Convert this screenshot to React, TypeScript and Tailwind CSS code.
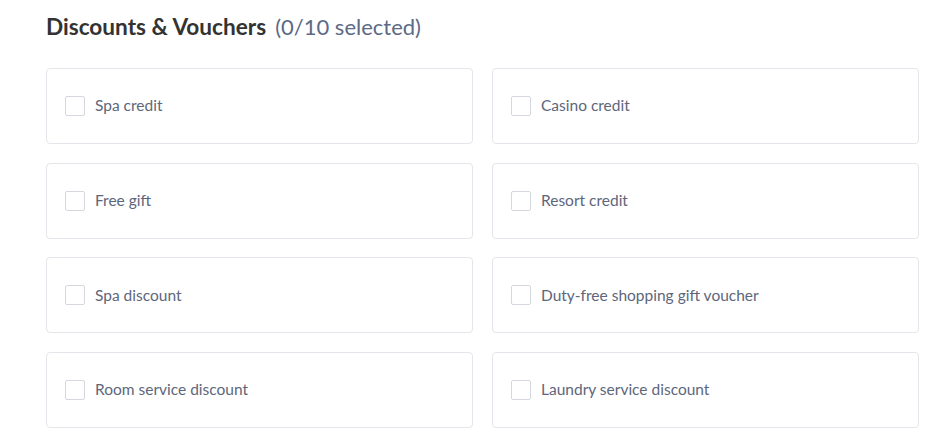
import React from "react";

const options = [
  "Spa credit",
  "Casino credit",
  "Free gift",
  "Resort credit",
  "Spa discount",
  "Duty-free shopping gift voucher",
  "Room service discount",
  "Laundry service discount",
];

export default function App() {
  return (
    <div className="min-h-screen bg-white pl-[46px] pr-[27px] pt-[13px] font-['Lato',sans-serif]">
      <h2 className="flex items-baseline h-[28px] text-[22.6px] leading-[28px] font-bold text-[#333333]">
        Discounts &amp; Vouchers
        <span className="ml-[9px] text-[22px] font-normal text-[#5c6a86]">(0/10 selected)</span>
      </h2>
      <div className="mt-[27px] grid grid-cols-2 gap-x-[19px] gap-y-[18.67px]">
        {options.map((label) => (
          <label
            key={label}
            className="flex h-[76px] items-center rounded-[4px] border border-[#e3e6ea] pl-[18px] cursor-pointer"
          >
            <span className="h-[20px] w-[20px] shrink-0 rounded-[2px] border border-[#d4d8de] bg-white" />
            <span className="ml-[10px] text-[15.5px] text-[#5d667a]">{label}</span>
          </label>
        ))}
      </div>
    </div>
  );
}
